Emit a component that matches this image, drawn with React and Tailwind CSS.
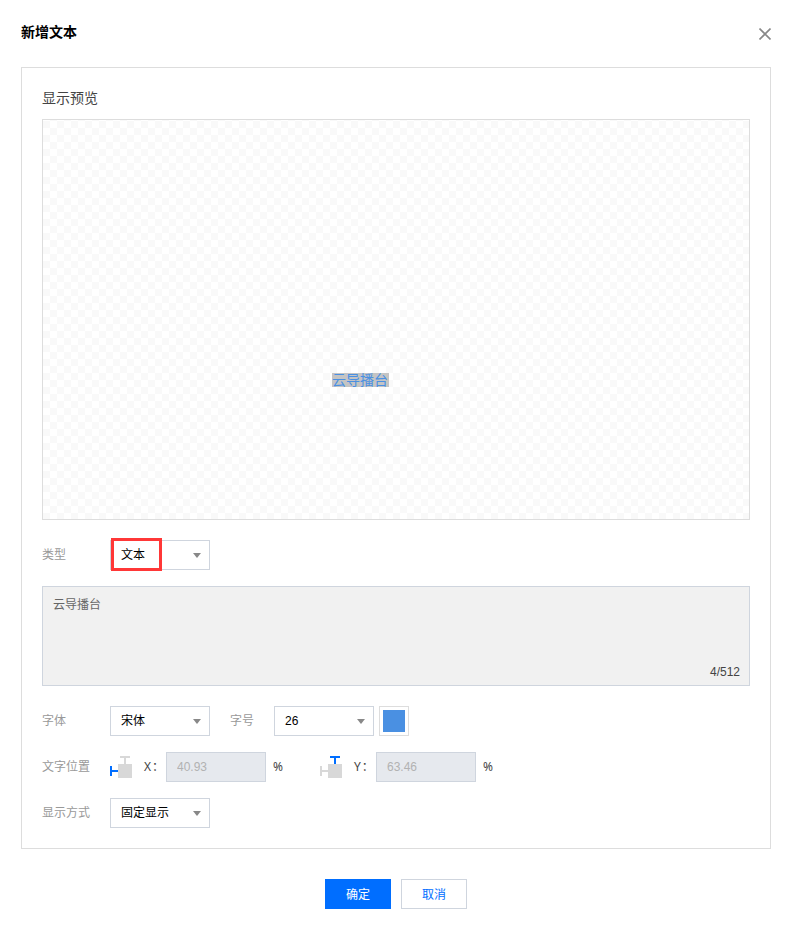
import React, { useState } from 'react';

function Select({ value }) {
  return (
    <button className="flex h-[30px] w-[100px] items-center justify-between border border-[#cfd5de] bg-white pl-[10px] pr-2 text-xs text-black">
      <span>{value}</span>
      <svg width="8" height="5" viewBox="0 0 8 5" className="mt-px">
        <path d="M0 0H8L4 5Z" fill="#888" />
      </svg>
    </button>
  );
}

function PositionIcon({ axis }) {
  const left = axis === 'x' ? '#006eff' : '#d8d8d8';
  const top = axis === 'y' ? '#006eff' : '#d8d8d8';
  return (
    <svg width="22" height="22" viewBox="0 0 22 22" shapeRendering="crispEdges">
      <path d="M8 8H22V22H8Z" fill="#d8d8d8" />
      <path d="M10 0H20V2H16V8H14V2H10Z" fill={top} />
      <path d="M0 10H2V14H8V16H2V20H0Z" fill={left} />
    </svg>
  );
}

function PositionField({ axis, label, value }) {
  return (
    <div className="flex w-[210px] items-center">
      <PositionIcon axis={axis} />
      <span className="ml-3 w-[22px] font-['Noto_Sans','Noto_Sans_CJK_SC',sans-serif] whitespace-nowrap text-[#444]">
        <span className="tracking-[1px]">{label}</span>：
      </span>
      <input
        className="h-[30px] w-[100px] border border-[#cfd5de] bg-[#e6e9ee] px-[10px] text-xs text-[#b2b2b2]"
        value={value}
        disabled
        readOnly
      />
      <span className="ml-[7px] font-['Noto_Sans',sans-serif] text-[#444]">%</span>
    </div>
  );
}

function Label({ children }) {
  return <span className="w-[68px] text-[#999]">{children}</span>;
}

export default function App() {
  const [text, setText] = useState('云导播台');

  return (
    <div className="h-[928px] w-[792px] bg-white px-[21px] pt-5 font-['Liberation_Sans','Noto_Sans_CJK_SC',sans-serif] text-xs text-[#444]">
      <div className="flex h-[47px] items-start justify-between">
        <h1 className="text-sm leading-6 font-bold text-black">新增文本</h1>
        <button className="mt-2">
          <svg width="12" height="12" viewBox="0 0 12 12" fill="none" className="block">
            <path d="M0.5 0.5L11.5 11.5M11.5 0.5L0.5 11.5" stroke="#888" strokeWidth="1.6" />
          </svg>
        </button>
      </div>

      <div className="h-[782px] w-[750px] border border-[#ddd] px-5 pt-5">
        <h2 className="h-[31px] text-sm leading-5 text-[#444]">显示预览</h2>

        {/* quadriculado de transparência */}
        <div className="relative h-[401px] border border-[#ddd] bg-[conic-gradient(#fff_25%,#f9f9f9_0_50%,#fff_0_75%,#f9f9f9_0)] bg-[length:14px_14px] bg-[position:0_1px]">
          <span className="absolute top-[253px] left-[289px] h-[14px] w-[57px] bg-[#c4c4c4] text-sm leading-[14px] whitespace-nowrap text-[#4a90e2]">
            {text}
          </span>
        </div>

        <div className="mt-5 flex h-[30px] items-center">
          <Label>类型</Label>
          <div className="relative">
            <Select value="文本" />
            <span className="absolute -top-[2px] left-[1px] h-[33px] w-[51px] border-3 border-[#ff3737]" />
          </div>
        </div>

        <div className="relative mt-4 h-[100px]">
          <textarea
            className="block h-full w-full resize-none border border-[#cfd5de] bg-[#f1f1f1] px-[10px] py-[9px] text-xs leading-[18px] text-[#666]"
            value={text}
            onChange={(e) => setText(e.target.value)}
          />
          <span className="absolute right-[10px] bottom-[5px] leading-[18px]">{text.length}/512</span>
        </div>

        <div className="mt-5 flex h-[30px] items-center">
          <Label>字体</Label>
          <Select value="宋体" />
          <span className="ml-5 w-11 text-[#999]">字号</span>
          <Select value="26" />
          <button className="ml-[5px] h-[30px] w-[30px] border border-[#ddd] p-[3px]">
            <span className="block h-[22px] w-[22px] bg-[#4a90e2]" />
          </button>
        </div>

        <div className="mt-4 flex h-[30px] items-center">
          <Label>文字位置</Label>
          <PositionField axis="x" label="X" value="40.93" />
          <PositionField axis="y" label="Y" value="63.46" />
        </div>

        <div className="mt-4 flex h-[30px] items-center">
          <Label>显示方式</Label>
          <Select value="固定显示" />
        </div>
      </div>

      <div className="mt-[30px] flex justify-center gap-[10px]">
        <button className="h-[30px] w-[66px] bg-[#006eff] pt-0.5 text-xs text-white">确定</button>
        <button className="h-[30px] w-[66px] border border-[#cfd5de] bg-white pt-0.5 text-xs text-[#006eff]">取消</button>
      </div>
    </div>
  );
}
